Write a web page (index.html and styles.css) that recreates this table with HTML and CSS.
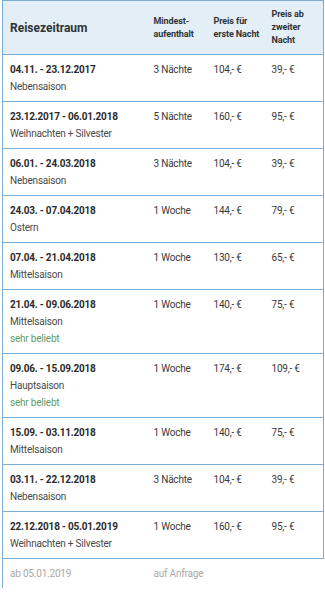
FILE: index.html
```html
<!DOCTYPE html>
<html lang="de">
<head>
<meta charset="utf-8">
<title>Preise</title>
<link rel="stylesheet" href="styles.css">
</head>
<body>
<table class="prices">
  <colgroup>
    <col class="c-period">
    <col class="c-stay">
    <col class="c-first">
    <col class="c-next">
  </colgroup>
  <thead>
    <tr>
      <th class="h-main">Reisezeitraum</th>
      <th class="h-small">Mindest-<br>aufenthalt</th>
      <th class="h-small">Preis für<br>erste Nacht</th>
      <th class="h-small">Preis ab<br>zweiter<br>Nacht</th>
    </tr>
  </thead>
  <tbody>
    <tr>
      <td><span class="date">04.11. - 23.12.2017</span><span class="season">Nebensaison</span></td>
      <td>3 Nächte</td><td>104,- €</td><td>39,- €</td>
    </tr>
    <tr>
      <td><span class="date">23.12.2017 - 06.01.2018</span><span class="season">Weihnachten + Silvester</span></td>
      <td>5 Nächte</td><td>160,- €</td><td>95,- €</td>
    </tr>
    <tr>
      <td><span class="date">06.01. - 24.03.2018</span><span class="season">Nebensaison</span></td>
      <td>3 Nächte</td><td>104,- €</td><td>39,- €</td>
    </tr>
    <tr>
      <td><span class="date">24.03. - 07.04.2018</span><span class="season">Ostern</span></td>
      <td>1 Woche</td><td>144,- €</td><td>79,- €</td>
    </tr>
    <tr>
      <td><span class="date">07.04. - 21.04.2018</span><span class="season">Mittelsaison</span></td>
      <td>1 Woche</td><td>130,- €</td><td>65,- €</td>
    </tr>
    <tr>
      <td><span class="date">21.04. - 09.06.2018</span><span class="season">Mittelsaison</span><span class="popular">sehr beliebt</span></td>
      <td>1 Woche</td><td>140,- €</td><td>75,- €</td>
    </tr>
    <tr>
      <td><span class="date">09.06. - 15.09.2018</span><span class="season">Hauptsaison</span><span class="popular">sehr beliebt</span></td>
      <td>1 Woche</td><td>174,- €</td><td>109,- €</td>
    </tr>
    <tr>
      <td><span class="date">15.09. - 03.11.2018</span><span class="season">Mittelsaison</span></td>
      <td>1 Woche</td><td>140,- €</td><td>75,- €</td>
    </tr>
    <tr>
      <td><span class="date">03.11. - 22.12.2018</span><span class="season">Nebensaison</span></td>
      <td>3 Nächte</td><td>104,- €</td><td>39,- €</td>
    </tr>
    <tr>
      <td><span class="date">22.12.2018 - 05.01.2019</span><span class="season">Weihnachten + Silvester</span></td>
      <td>1 Woche</td><td>160,- €</td><td>95,- €</td>
    </tr>
    <tr class="request">
      <td>ab 05.01.2019</td>
      <td>auf Anfrage</td><td></td><td></td>
    </tr>
  </tbody>
</table>
</body>
</html>
```

FILE: styles.css
```css
html, body {
  margin: 0;
  padding: 0;
  background: #ffffff;
}

body {
  font-family: Roboto, "Liberation Sans", sans-serif;
  color: #333333;
}

.prices {
  margin-left: 2px;
  width: 321px;
  table-layout: fixed;
  border-collapse: collapse;
  font-size: 10px;
}

.c-period { width: 144px; }
.c-stay { width: 60px; }
.c-first { width: 58px; }
.c-next { width: 59px; }

.prices thead tr {
  background: #e4eef7;
  border-top: 1px solid #7aaed6;
  border-bottom: 1px solid #7aaed6;
}

.prices th {
  text-align: left;
  vertical-align: middle;
  padding: 7px 0 7px 7px;
  color: #2f3438;
  font-weight: 700;
}

.prices th:first-child,
.prices td:first-child {
  border-left: 1px solid #7aaed6;
}

.prices th:last-child,
.prices td:last-child {
  border-right: 1px solid #7aaed6;
}

.h-main {
  font-size: 12px;
}

.h-small {
  font-size: 9px;
  line-height: 13px;
  letter-spacing: -0.1px;
}

.prices tbody tr {
  border-bottom: 1px solid #7aaed6;
}

.prices td {
  vertical-align: top;
  padding: 6px 0 6px 7px;
  line-height: 17px;
  font-size: 10px;
  letter-spacing: -0.2px;
  color: #3a3a3a;
  white-space: nowrap;
}

.date {
  display: block;
  font-weight: 700;
  color: #2b2b2b;
}

.season {
  display: block;
  color: #4a4a4a;
}

.popular {
  display: block;
  color: #5e9d6c;
}

.prices tbody tr.request {
  border-bottom: none;
}

.prices tr.request td {
  color: #a9a9a9;
}

.prices tr.request td:last-child {
  border-right: none;
}
```
